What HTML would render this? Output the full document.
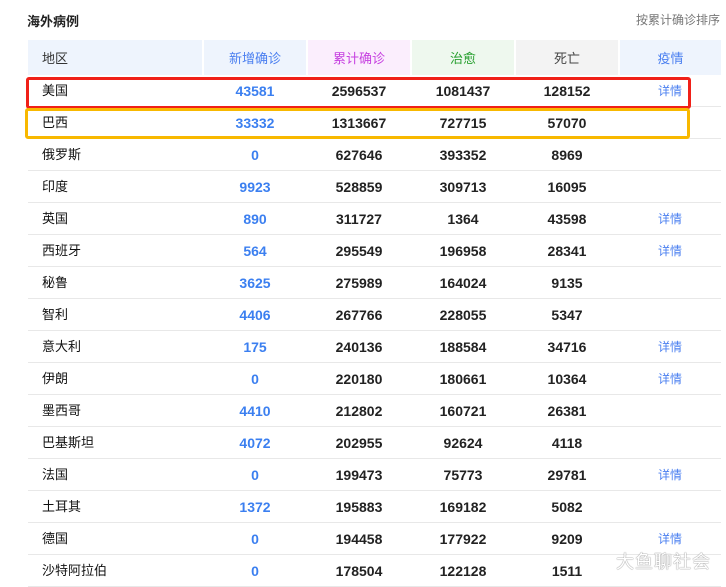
<!DOCTYPE html><html><head><meta charset="utf-8"><style>
body{margin:0;width:726px;height:583px;background:#fff;overflow:hidden;font-family:"Liberation Sans","Noto Sans CJK SC",sans-serif;position:relative}
.t{position:absolute;left:27px;top:11px;font-size:13px;font-weight:bold;color:#222}
.s{position:absolute;left:636px;top:11px;font-size:12px;color:#777;white-space:nowrap}
table{position:absolute;left:28px;top:40px;border-collapse:collapse;width:693px;font-size:13px}
th{height:35px;font-weight:normal;border-right:2px solid #fff;padding:0}
td{height:31px;border-bottom:1px solid #e8e8e8;text-align:center;font-weight:bold;color:#222;padding:0;font-size:14px;line-height:16px}
td:first-child{text-align:left;padding-left:14px;font-weight:normal;color:#111;font-size:13px}
th:first-child{text-align:left;padding-left:14px}
.b{color:#3b7ff0}.d{color:#4a7ff0;font-weight:normal;font-size:12px!important}
.box{position:absolute;border-radius:3px}
.wm{position:absolute;left:616px;top:548px;font-size:18px;color:#fff;text-shadow:0 0 1px #888,0 0 1px #888;letter-spacing:1px}
</style></head><body>
<div class="t">海外病例</div><div class="s">按累计确诊排序</div>
<table>
<tr><th style="width:160px;background:#eef4fd;color:#333">地区</th><th style="width:102px;background:#eef4fd;color:#4a7ff0">新增确诊</th><th style="width:102px;background:#fbeefd;color:#c640e0">累计确诊</th><th style="width:102px;background:#eef8ee;color:#28a030">治愈</th><th style="width:102px;background:#f3f3f3;color:#444">死亡</th><th style="background:#eef4fd;color:#4a7ff0;border-right:0">疫情</th></tr>
<tr><td>美国</td><td class="b">43581</td><td>2596537</td><td>1081437</td><td>128152</td><td class="d">详情</td></tr>
<tr><td>巴西</td><td class="b">33332</td><td>1313667</td><td>727715</td><td>57070</td><td></td></tr>
<tr><td>俄罗斯</td><td class="b">0</td><td>627646</td><td>393352</td><td>8969</td><td></td></tr>
<tr><td>印度</td><td class="b">9923</td><td>528859</td><td>309713</td><td>16095</td><td></td></tr>
<tr><td>英国</td><td class="b">890</td><td>311727</td><td>1364</td><td>43598</td><td class="d">详情</td></tr>
<tr><td>西班牙</td><td class="b">564</td><td>295549</td><td>196958</td><td>28341</td><td class="d">详情</td></tr>
<tr><td>秘鲁</td><td class="b">3625</td><td>275989</td><td>164024</td><td>9135</td><td></td></tr>
<tr><td>智利</td><td class="b">4406</td><td>267766</td><td>228055</td><td>5347</td><td></td></tr>
<tr><td>意大利</td><td class="b">175</td><td>240136</td><td>188584</td><td>34716</td><td class="d">详情</td></tr>
<tr><td>伊朗</td><td class="b">0</td><td>220180</td><td>180661</td><td>10364</td><td class="d">详情</td></tr>
<tr><td>墨西哥</td><td class="b">4410</td><td>212802</td><td>160721</td><td>26381</td><td></td></tr>
<tr><td>巴基斯坦</td><td class="b">4072</td><td>202955</td><td>92624</td><td>4118</td><td></td></tr>
<tr><td>法国</td><td class="b">0</td><td>199473</td><td>75773</td><td>29781</td><td class="d">详情</td></tr>
<tr><td>土耳其</td><td class="b">1372</td><td>195883</td><td>169182</td><td>5082</td><td></td></tr>
<tr><td>德国</td><td class="b">0</td><td>194458</td><td>177922</td><td>9209</td><td class="d">详情</td></tr>
<tr><td>沙特阿拉伯</td><td class="b">0</td><td>178504</td><td>122128</td><td>1511</td><td></td></tr>
</table>
<div class="box" style="left:26px;top:77px;width:659px;height:26px;border:3px solid #f02018"></div>
<div class="box" style="left:25px;top:108px;width:659px;height:25px;border:3px solid #f8b800"></div>
<div class="wm">大鱼聊社会</div>
</body></html>
